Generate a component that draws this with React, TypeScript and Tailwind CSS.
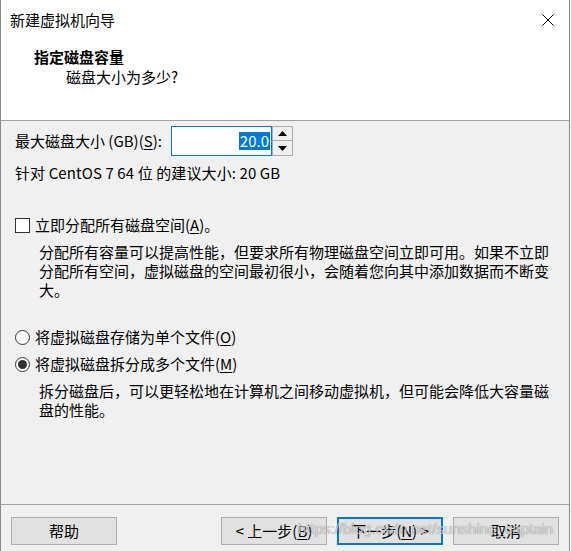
import React from 'react'

const font = {
  fontFamily: '"Noto Sans CJK SC", "Noto Sans", sans-serif',
}

function Mn({ children }: { children: React.ReactNode }) {
  return <span className="underline underline-offset-2">{children}</span>
}

function WinButton({ children, primary }: { children: React.ReactNode; primary?: boolean }) {
  return (
    <div
      className={
        primary
          ? 'w-[106px] h-[28px] flex items-center justify-center bg-[#e1e1e1] border-2 border-[#0078d7] text-[15px] text-black'
          : 'w-[106px] h-[28px] flex items-center justify-center bg-[#e1e1e1] border border-[#adadad] text-[15px] text-black'
      }
    >
      {children}
    </div>
  )
}

export default function App() {
  return (
    <div className="w-[571px] h-[551px] bg-white relative overflow-hidden" style={font}>
      <div className="w-[570px] h-[551px] flex flex-col border-x border-[#8a8a8a] bg-[#f0f0f0]">
        {/* title bar */}
        <div className="h-[40px] bg-white flex items-center justify-between pl-[9px] pr-[15px]">
          <span className="text-[15px] text-black leading-[20px]">新建虚拟机向导</span>
          <svg width="12" height="12" viewBox="0 0 12 12">
            <path d="M0.5 0.5 L11.5 11.5 M11.5 0.5 L0.5 11.5" stroke="#000" strokeWidth="1" />
          </svg>
        </div>

        {/* header */}
        <div className="h-[81px] bg-white border-b border-[#a0a0a0] pl-[33px] pt-[7px]">
          <div className="text-[15px] font-bold leading-[20px] text-black">指定磁盘容量</div>
          <div className="text-[15px] leading-[20px] text-black pl-[32px]">磁盘大小为多少?</div>
        </div>

        {/* body */}
        <div className="flex-1 flex flex-col pl-[14px] pr-[16px] text-[15px] text-black">
          <div className="mt-[5px] flex items-center h-[30px]">
            <span className="leading-[20px]">
              最大磁盘大小 (GB)(<Mn>S</Mn>):
            </span>
            <div className="ml-[9px] flex h-[30px]">
              <div className="w-[101px] h-[30px] bg-white border border-[#0078d7] flex items-center justify-end pr-[1px]">
                <span className="bg-[#0078d7] text-white leading-[18px] px-[1px]">20.0</span>
              </div>
              <div className="flex flex-col w-[21px] h-[30px]">
                <div className="h-[15px] border border-[#adadad] bg-[#f0f0f0] flex items-center justify-center">
                  <svg width="9" height="5" viewBox="0 0 9 5">
                    <path d="M4.5 0 L9 5 L0 5 Z" fill="#000" />
                  </svg>
                </div>
                <div className="h-[15px] border border-t-0 border-[#adadad] bg-[#f0f0f0] flex items-center justify-center">
                  <svg width="9" height="5" viewBox="0 0 9 5">
                    <path d="M0 0 L9 0 L4.5 5 Z" fill="#000" />
                  </svg>
                </div>
              </div>
            </div>
          </div>

          <div className="mt-[7px] leading-[20px] tracking-[0.1px]">针对 CentOS 7 64 位 的建议大小: 20 GB</div>

          <div className="mt-[32px] flex items-center h-[20px]">
            <div className="w-[15px] h-[15px] border border-[#333] bg-white" />
            <span className="ml-[5px] leading-[20px]">
              立即分配所有磁盘空间(<Mn>A</Mn>)。
            </span>
          </div>
          <p className="mt-[7px] pl-[24px] leading-[19px]">
            分配所有容量可以提高性能，但要求所有物理磁盘空间立即可用。如果不立即分配所有空间，虚拟磁盘的空间最初很小，会随着您向其中添加数据而不断变大。
          </p>

          <div className="mt-[28px] flex items-center h-[20px]">
            <div className="w-[15px] h-[15px] rounded-full border border-[#333] bg-white" />
            <span className="ml-[5px] leading-[20px]">
              将虚拟磁盘存储为单个文件(<Mn>O</Mn>)
            </span>
          </div>
          <div className="mt-[7px] flex items-center h-[20px]">
            <div className="w-[15px] h-[15px] rounded-full border border-[#333] bg-white flex items-center justify-center">
              <div className="w-[9px] h-[9px] rounded-full bg-[#333]" />
            </div>
            <span className="ml-[5px] leading-[20px]">
              将虚拟磁盘拆分成多个文件(<Mn>M</Mn>)
            </span>
          </div>
          <p className="mt-[7px] pl-[24px] leading-[19px]">
            拆分磁盘后，可以更轻松地在计算机之间移动虚拟机，但可能会降低大容量磁盘的性能。
          </p>
        </div>

        {/* footer */}
        <div className="h-[47px] border-t border-[#a0a0a0] flex items-start pt-[12px] pl-[10px] pr-[10px]">
          <WinButton>帮助</WinButton>
          <div className="flex-1" />
          <div className="flex gap-[10px]">
            <WinButton>
              &lt; 上一步(<Mn>B</Mn>)
            </WinButton>
            <WinButton primary>
              下一步(<Mn>N</Mn>) &gt;
            </WinButton>
            <WinButton>取消</WinButton>
          </div>
        </div>
      </div>

      {/* watermark */}
      <div
        className="absolute left-[298px] top-[519px] text-[15px] leading-[20px] text-[#d6d6d6] opacity-80 pointer-events-none [text-shadow:0_0_1px_rgba(0,0,0,0.6)]"
        style={{ fontFamily: '"Liberation Sans", Arial, sans-serif' }}
      >
        https://blog.csdn.net/sunshine_captain
      </div>
    </div>
  )
}
